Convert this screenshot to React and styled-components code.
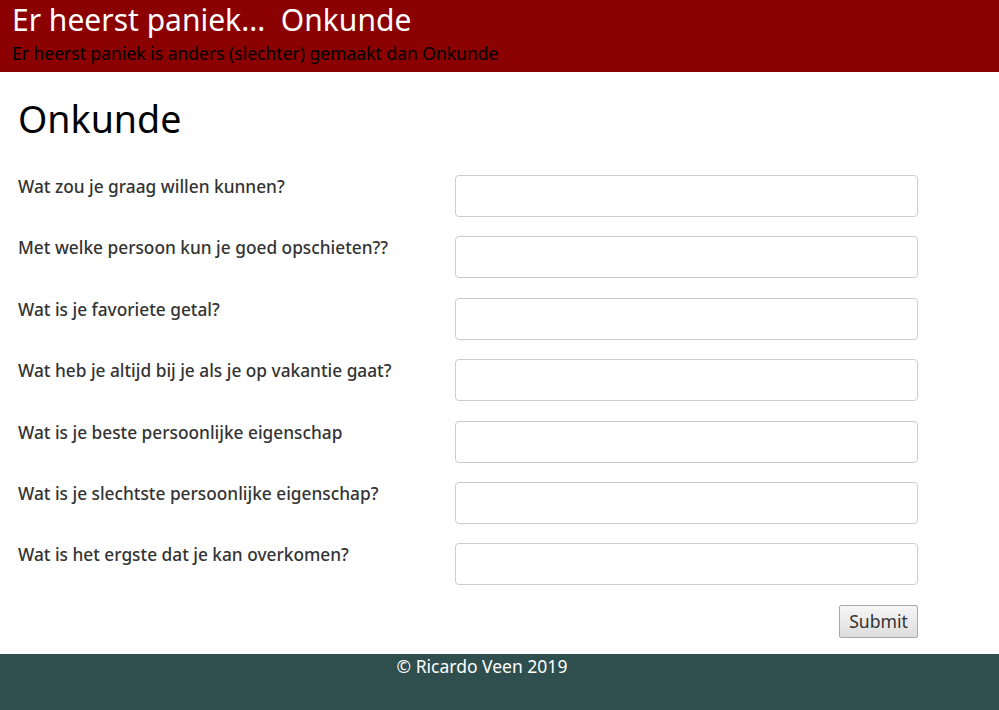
import React from "react";
import styled, { createGlobalStyle } from "styled-components";

const Global = createGlobalStyle`
  html, body { margin: 0; padding: 0; background: #fff; }
  body { font-family: "Noto Sans", "Open Sans", sans-serif; }
`;

const Page = styled.div`
  display: flex;
  flex-direction: column;
  min-height: 710px;
`;

const Header = styled.header`
  background: #8b0000;
  height: 72px;
  box-sizing: border-box;
  padding: 0 12px;
`;

const SiteTitle = styled.div`
  color: #fff;
  font-size: 30px;
  line-height: 40px;
  white-space: pre;
`;

const SiteSub = styled.div`
  color: #000;
  font-size: 17.5px;
  line-height: 24px;
  margin-top: 1px;
`;

const Main = styled.main`
  padding: 0 18px 16px 18px;
`;

const Title = styled.h1`
  font-size: 37.6px;
  font-weight: 400;
  line-height: 44px;
  margin: 25px 0 34px;
  color: #000;
`;

const Form = styled.form`
  display: flex;
  flex-direction: column;
  gap: 19.4px;
  width: 900px;
`;

const Row = styled.div`
  display: flex;
  align-items: flex-start;
`;

const Label = styled.label`
  width: 437px;
  flex: none;
  font-size: 17.3px;
  font-weight: 500;
  line-height: 22px;
  color: #333;
  padding-top: 1px;
`;

const Input = styled.input`
  width: 463px;
  height: 42px;
  box-sizing: border-box;
  border: 1px solid #ccc;
  border-radius: 4px;
  font-family: inherit;
  font-size: 16px;
  padding: 6px 12px;
`;

const Actions = styled.div`
  display: flex;
  justify-content: flex-end;
  width: 900px;
`;

const Button = styled.button`
  font-family: inherit;
  font-size: 17.6px;
  color: #333;
  height: 33px;
  width: 79px;
  padding: 0;
  border: 1px solid #a9a9a9;
  border-radius: 2px;
  background: linear-gradient(#f6f6f6, #dddddd);
`;

const Footer = styled.footer`
  background: #2f4f4f;
  height: 56px;
  color: #fff;
  font-size: 17.5px;
  line-height: 24px;
  text-align: center;
  padding-right: 35px;
`;

const questions = [
  "Wat zou je graag willen kunnen?",
  "Met welke persoon kun je goed opschieten??",
  "Wat is je favoriete getal?",
  "Wat heb je altijd bij je als je op vakantie gaat?",
  "Wat is je beste persoonlijke eigenschap",
  "Wat is je slechtste persoonlijke eigenschap?",
  "Wat is het ergste dat je kan overkomen?",
];

export default function App() {
  return (
    <Page>
      <Global />
      <Header>
        <SiteTitle>{"Er heerst paniek...  Onkunde"}</SiteTitle>
        <SiteSub>Er heerst paniek is anders (slechter) gemaakt dan Onkunde</SiteSub>
      </Header>
      <Main>
        <Title>Onkunde</Title>
        <Form onSubmit={(e) => e.preventDefault()}>
          {questions.map((q, i) => (
            <Row key={i}>
              <Label htmlFor={"q" + i}>{q}</Label>
              <Input id={"q" + i} type="text" />
            </Row>
          ))}
          <Actions>
            <Button type="submit">Submit</Button>
          </Actions>
        </Form>
      </Main>
      <Footer>© Ricardo Veen 2019</Footer>
    </Page>
  );
}
